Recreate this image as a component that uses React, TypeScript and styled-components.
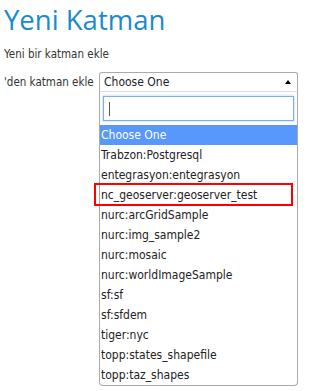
import React from "react";
import styled, { createGlobalStyle } from "styled-components";

const Global = createGlobalStyle`
  html, body { margin: 0; padding: 0; background: #fff; }
  body { font-family: "DejaVu Sans Condensed", "DejaVu Sans", Verdana, sans-serif; color: #222; }
`;

const Page = styled.div`
  padding: 4px 0 0 4px;
  width: 312px;
`;

const Title = styled.h1`
  margin: 0;
  font-family: "Open Sans", "Liberation Sans", sans-serif;
  font-weight: 400;
  font-size: 27.5px;
  line-height: 32px;
  color: #1a8bc9;
`;

const Subtitle = styled.p`
  margin: 11px 0 0 0;
  font-size: 11.5px;
  line-height: 14px;
  color: #333;
`;

const Row = styled.div`
  display: flex;
  align-items: flex-start;
  margin-top: 11px;
`;

const Label = styled.label`
  width: 95px;
  font-size: 11.5px;
  line-height: 20px;
  color: #333;
  white-space: nowrap;
`;

const SelectWrap = styled.div`
  width: 199px;
  display: flex;
  flex-direction: column;
`;

const Select = styled.div`
  height: 18px;
  border: 1px solid #aaa;
  border-bottom-color: #ddd;
  border-radius: 3px 3px 0 0;
  background: #fff;
  display: flex;
  align-items: center;
  justify-content: space-between;
  padding: 0 5px 0 4px;
  font-size: 12px;
  color: #222;
`;

const Arrow = styled.span`
  width: 0;
  height: 0;
  border-left: 3.5px solid transparent;
  border-right: 3.5px solid transparent;
  border-bottom: 4px solid #000;
  margin-right: 1px;
`;

const Panel = styled.div`
  border: 1px solid #aaa;
  border-top: none;
  border-radius: 0 0 4px 4px;
  background: #fff;
  display: flex;
  flex-direction: column;
`;

const SearchBox = styled.div`
  padding: 4px 3px 4px 3px;
`;

const Search = styled.div`
  height: 23px;
  border: 1.5px solid #7aaef7;
  box-shadow: 0 0 2px rgba(88, 151, 251, 0.6);
  display: flex;
  align-items: center;
  padding-left: 5px;
`;

const Caret = styled.span`
  width: 1px;
  height: 14px;
  background: #555;
`;

const Option = styled.div<{ $active?: boolean }>`
  position: relative;
  height: 20px;
  line-height: 20px;
  padding-left: 1px;
  font-size: 12px;
  white-space: nowrap;
  background: ${(p) => (p.$active ? "#5897fb" : "transparent")};
  color: ${(p) => (p.$active ? "#fff" : "#222")};
`;

const Mark = styled.span`
  position: absolute;
  left: -6px;
  top: -2px;
  width: 195px;
  height: 19px;
  border: 2px solid #f00;
  pointer-events: none;
`;

const options = [
  "Trabzon:Postgresql",
  "entegrasyon:entegrasyon",
  "nc_geoserver:geoserver_test",
  "nurc:arcGridSample",
  "nurc:img_sample2",
  "nurc:mosaic",
  "nurc:worldImageSample",
  "sf:sf",
  "sf:sfdem",
  "tiger:nyc",
  "topp:states_shapefile",
  "topp:taz_shapes",
];

export default function App() {
  return (
    <Page>
      <Global />
      <Title>Yeni Katman</Title>
      <Subtitle>Yeni bir katman ekle</Subtitle>
      <Row>
        <Label>'den katman ekle</Label>
        <SelectWrap>
          <Select>
            <span>Choose One</span>
            <Arrow />
          </Select>
          <Panel>
            <SearchBox>
              <Search>
                <Caret />
              </Search>
            </SearchBox>
            <Option $active>Choose One</Option>
            {options.map((o) => (
              <Option key={o}>
                {o}
                {o === "nc_geoserver:geoserver_test" && <Mark />}
              </Option>
            ))}
          </Panel>
        </SelectWrap>
      </Row>
    </Page>
  );
}
